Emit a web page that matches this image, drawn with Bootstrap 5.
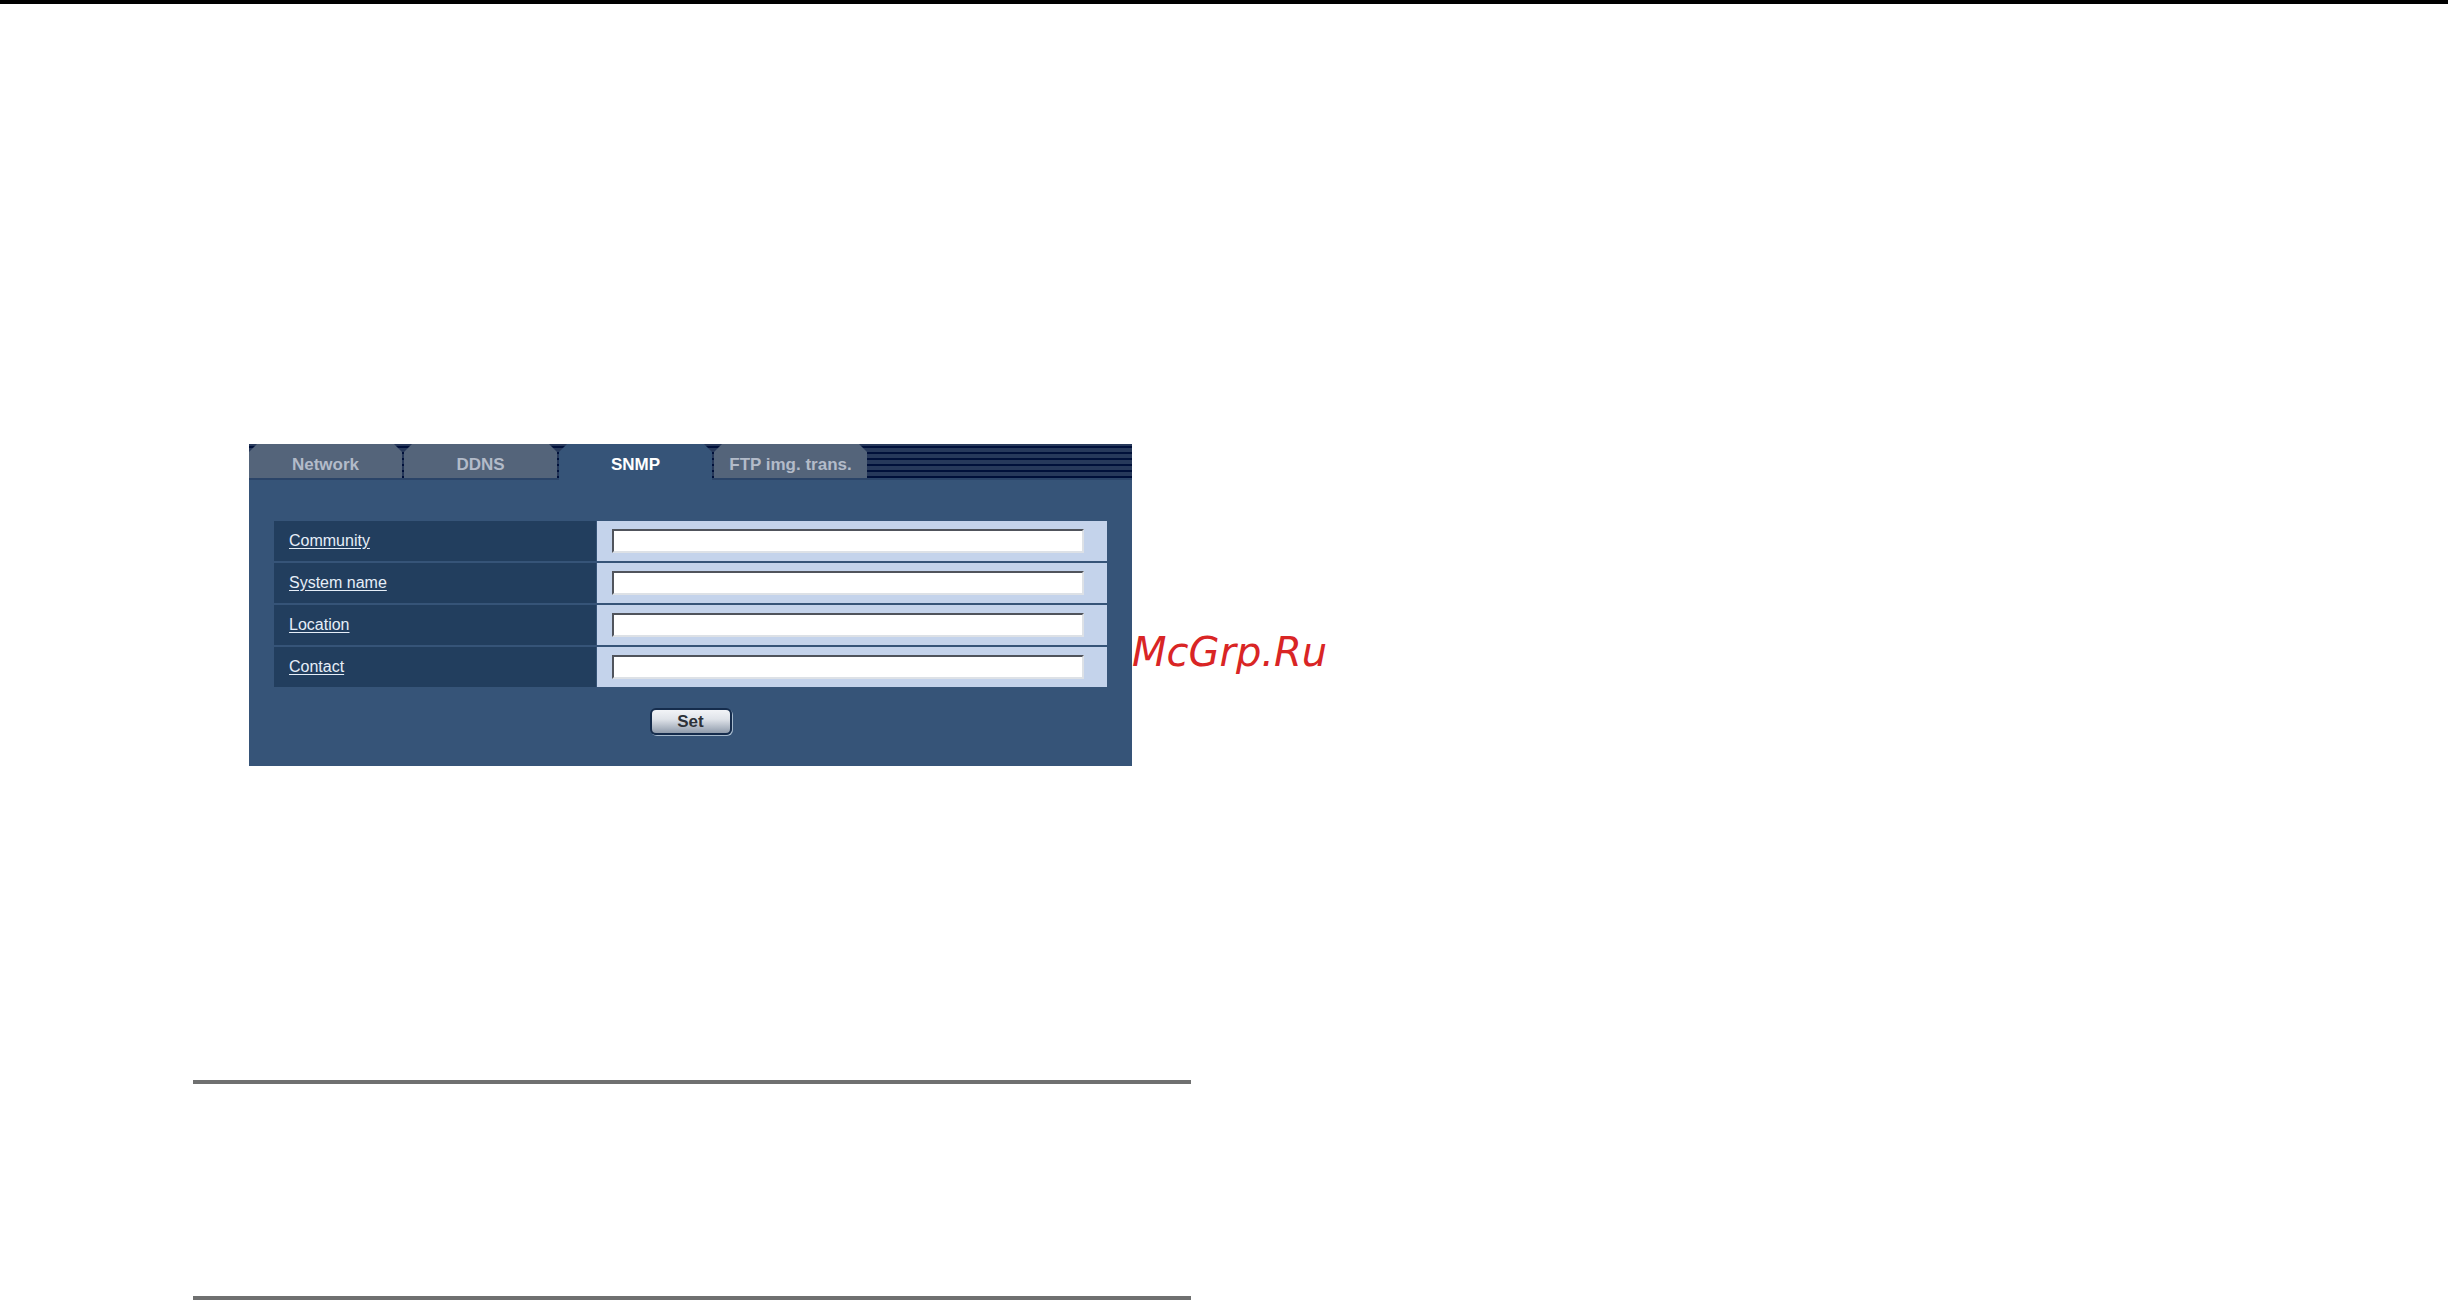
<!DOCTYPE html>
<html lang="en">
<head>
<meta charset="utf-8">
<meta name="viewport" content="width=device-width, initial-scale=1">
<title>SNMP</title>
<link href="https://cdn.jsdelivr.net/npm/bootstrap@5.3.0/dist/css/bootstrap.min.css" rel="stylesheet">
<style>
  body { font-family: "Liberation Sans", Arial, sans-serif; background: #fff; }
  .page-bar { height: 4px; background: #000; }
  .page-main { padding: 440px 48px 0 193px; }
  .section-rule { max-width: 998px; height: 4px; background: #6f7070; border: 0; opacity: 1; margin: 0; }
  .figure-line { margin: 0 0 314px 56px; }
  .rule-gap { margin-bottom: 212px; }
  .setup-panel { flex: 0 1 883px; background: #365478; }
  .tab-strip {
    height: 36px; gap: 2px; border-bottom: 2px solid #2b4468;
    background: repeating-linear-gradient(#27395b 0 2px, #00103a 2px 4px, #27395b 4px 6px);
  }
  .tab-link {
    flex: 0 1 153px; line-height: 42px; font-size: 17px; font-weight: bold;
    color: #b3bbc9; background: #54647a; text-align: center; text-decoration: none; white-space: nowrap;
    clip-path: polygon(8px 0, calc(100% - 8px) 0, 100% 8px, 100% 100%, 0 100%, 0 8px);
  }
  .tab-link.active { color: #fff; background: #365478; margin-bottom: -2px; }
  .panel-body { padding: 41px 25px 31px; }
  .field-list { gap: 2px; margin-bottom: 21px; }
  .field-line { gap: 1px; height: 40px; }
  .field-name { flex: 0 0 322px; background: #223e5e; padding-left: 15px; font-size: 16px; }
  .field-name label { color: #e6eef8; text-decoration: underline; text-underline-offset: 2px; }
  .field-cell { background: #c4d3eb; padding: 0 23px 0 15px; }
  .field-input {
    height: 24px; font-size: 16px; background: #fff; padding: 0 4px; border-radius: 0;
    border: 2px solid; border-color: #50545c #dde1e6 #dde1e6 #50545c;
  }
  .set-button {
    width: 82px; height: 27px; padding: 0; font-size: 17px; line-height: 21px; font-weight: bold; color: #2d3138;
    border: 2px solid #152c4c; border-radius: 6px; box-shadow: 1px 1px 0 #a5b9cc;
    background: linear-gradient(#f2f4f7, #dfe3e9 40%, #8f9bab);
  }
  .site-mark { font: italic 40px/48px "DejaVu Sans", sans-serif; color: #d92525; padding-top: 184px; }
</style>
</head>
<body>
<div class="page-bar"></div>
<main class="page-main">
  <div class="figure-line d-flex">
    <section class="setup-panel">
      <nav class="tab-strip d-flex" aria-label="Setup pages">
        <a class="tab-link" href="#network">Network</a>
        <a class="tab-link" href="#ddns">DDNS</a>
        <a class="tab-link active" href="#snmp" aria-current="page">SNMP</a>
        <a class="tab-link" href="#ftp">FTP img. trans.</a>
      </nav>
      <form class="panel-body">
        <div class="field-list d-flex flex-column">
          <div class="field-line d-flex">
            <div class="field-name d-flex align-items-center"><label for="community">Community</label></div>
            <div class="field-cell d-flex align-items-center flex-grow-1"><input class="field-input w-100" type="text" id="community"></div>
          </div>
          <div class="field-line d-flex">
            <div class="field-name d-flex align-items-center"><label for="system-name">System name</label></div>
            <div class="field-cell d-flex align-items-center flex-grow-1"><input class="field-input w-100" type="text" id="system-name"></div>
          </div>
          <div class="field-line d-flex">
            <div class="field-name d-flex align-items-center"><label for="location">Location</label></div>
            <div class="field-cell d-flex align-items-center flex-grow-1"><input class="field-input w-100" type="text" id="location"></div>
          </div>
          <div class="field-line d-flex">
            <div class="field-name d-flex align-items-center"><label for="contact">Contact</label></div>
            <div class="field-cell d-flex align-items-center flex-grow-1"><input class="field-input w-100" type="text" id="contact"></div>
          </div>
        </div>
        <div class="d-flex justify-content-center"><button class="set-button" type="button">Set</button></div>
      </form>
    </section>
    <div class="site-mark">McGrp.Ru</div>
  </div>
  <hr class="section-rule rule-gap">
  <hr class="section-rule">
</main>
<script src="https://cdn.jsdelivr.net/npm/bootstrap@5.3.0/dist/js/bootstrap.bundle.min.js"></script>
</body>
</html>
